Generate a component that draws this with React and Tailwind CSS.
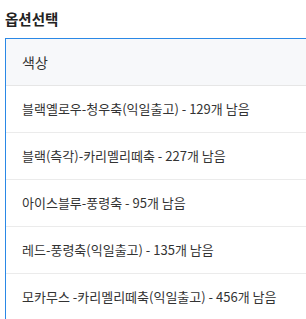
import React from 'react';

const options = [
  '블랙옐로우-청우축(익일출고) - 129개 남음',
  '블랙(측각)-카리멜리떼축 - 227개 남음',
  '아이스블루-풍령축 - 95개 남음',
  '레드-풍령축(익일출고) - 135개 남음',
  '모카무스 -카리멜리떼축(익일출고) - 456개 남음',
];

// option select list
function App() {
  return (
    <div
      className="w-[306px] h-[319px] overflow-hidden bg-white pl-[5px]"
      style={{ fontFamily: '"Noto Sans CJK KR", "Noto Sans", sans-serif' }}
    >
      <div className="h-[38px] flex items-center">
        <h2 className="text-[14.5px] font-bold text-[#222] leading-none">옵션선택</h2>
      </div>
      <div className="w-[340px] border-t border-l border-[#2a88e6]">
        <div className="h-[47px] flex items-center pl-[16px] bg-[#f7f8fa] border-b border-[#e6e6e6] text-[14px] text-[#333]">
          색상
        </div>
        {options.map((opt) => (
          <div
            key={opt}
            className="h-[47px] flex items-center pl-[16px] border-b border-[#ebebeb] text-[13px] text-[#333] whitespace-nowrap"
          >
            {opt}
          </div>
        ))}
      </div>
    </div>
  );
}

export default App;
